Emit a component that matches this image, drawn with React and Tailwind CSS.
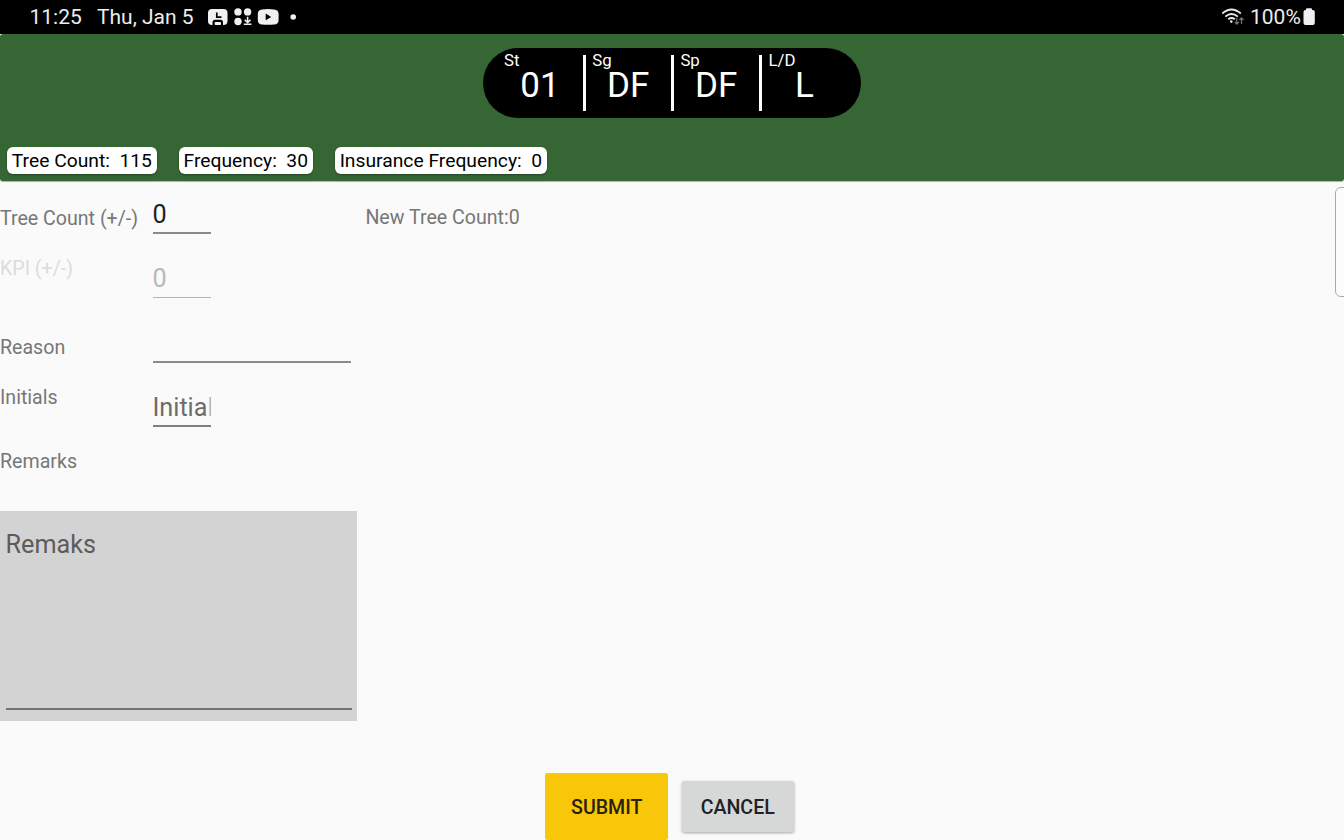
import React from "react";

function StatusBar() {
  return (
    <div className="flex h-[34px] shrink-0 items-center bg-black pl-[29.5px] pr-[28px] text-[21px] leading-[34px] text-[#ececec]">
      <span className="w-[67.5px]">11:25</span>
      <span className="w-[111px]">Thu, Jan 5</span>
      <svg width="90" height="34" viewBox="208 0 90 34" fill="#f0f0f0">
        <rect x="208" y="9" width="19.5" height="16" rx="4" />
        <path d="M216.8 12.5V17.2H221.5" fill="none" stroke="#000" strokeWidth="1.7" />
        <path d="M212.5 25.5V22.5Q212.5 19.8 215.2 19.8H220.5Q223 19.8 223 22.5V25.5Z" fill="#000" />
        <rect x="214.7" y="21.9" width="6.3" height="3.1" rx=".8" />
        <circle cx="238" cy="11.9" r="3.7" />
        <circle cx="247.6" cy="11.9" r="3.7" />
        <circle cx="238" cy="21.5" r="3.7" />
        <path d="M247.6 16.8V22.5M244.7 19.8L247.6 22.5L250.5 19.8M243.8 24.3H251.4" fill="none" stroke="#f0f0f0" strokeWidth="1.6" />
        <path d="M262 9.4Q268 8.8 274 9.4Q278.6 9.7 278.6 14V20Q278.6 24.3 274 24.6Q268 25.1 262 24.6Q257.8 24.3 257.8 20V14Q257.8 9.7 262 9.4Z" />
        <path d="M265.7 13.6L271.2 16.9L265.7 20.2Z" fill="#000" />
        <circle cx="293.2" cy="17" r="2.8" />
      </svg>
      <div className="grow" />
      <svg width="28" height="34" viewBox="1222 0 28 34" fill="none" stroke="#e8e8e8" strokeWidth="1.9">
        <path d="M1222.3 13.5Q1231.5 5.5 1240.8 13.5M1225.3 16.6Q1231.5 11.2 1237.8 16.6M1228.3 19.3Q1231.5 16.8 1234.8 19.3" />
        <circle cx="1231.3" cy="21.6" r="1.3" fill="#e8e8e8" stroke="none" />
        <g stroke="#777" strokeWidth="1.2">
          <path d="M1236.8 18V24M1234.8 22L1236.8 24.2L1238.8 22M1241.5 24V18M1239.5 20L1241.5 17.8L1243.5 20" />
        </g>
      </svg>
      <span className="w-[53px] whitespace-nowrap">100%</span>
      <svg width="13" height="34" viewBox="0 0 13 34" fill="#f0f0f0">
        <rect x="3" y="8.3" width="6" height="4" rx="1" />
        <rect x=".5" y="10" width="11.3" height="15" rx="2" />
      </svg>
    </div>
  );
}

function Segment({ label, value, last }) {
  return (
    <div className="flex">
      <div className="relative w-[79px] text-white">
        <span className="absolute left-[0.5px] top-[2px] text-[16.8px] leading-5">{label}</span>
        <div className="pt-[17px] pr-[6.2px] text-center text-[35px] leading-[41px]">{value}</div>
      </div>
      {!last && <div className="mt-[7px] mr-[6.2px] h-[56px] w-[3px] bg-white" />}
    </div>
  );
}

function Chip({ children }) {
  return (
    <div className="flex h-[27px] items-center whitespace-pre rounded-[6px] bg-white px-[4.8px] pt-[2px] text-[19.27px] text-black shadow-[0_1px_2px_rgba(0,0,0,0.35)]">
      {children}
    </div>
  );
}

function Row({ label, high, disabled, children }) {
  return (
    <div className="flex h-[64.4px]">
      <div className={`w-[152.5px] whitespace-nowrap leading-[23px] ${high ? "pt-[11.7px]" : "pt-[26px]"} ${disabled ? "text-[#dcdcdc]" : "text-[#777777]"}`}>
        {label}
      </div>
      {children}
    </div>
  );
}

function Field({ wide, className = "", children }) {
  return (
    <div className={`h-[53px] overflow-hidden whitespace-nowrap pt-[19px] text-[25.2px] leading-[30px] ${wide ? "w-[198.4px]" : "w-[58.4px]"} ${className}`}>
      {children}
    </div>
  );
}

export default function App() {
  return (
    <div className="relative flex h-[840px] w-[1344px] flex-col overflow-hidden bg-[#fafafa] font-[Roboto,sans-serif] text-[19.6px]">
      <StatusBar />
      <header className="flex h-[147px] shrink-0 flex-col items-center rounded-[3px] bg-[#366634] shadow-[0_1px_1px_rgba(0,0,0,0.3)]">
        <div className="mt-[13.5px] flex h-[70.5px] w-[378px] rounded-full bg-black pl-[20.5px]">
          <Segment label="St" value="01" />
          <Segment label="Sg" value="DF" />
          <Segment label="Sp" value="DF" />
          <Segment label="L/D" value="L" last />
        </div>
        <div className="mt-[29px] flex gap-[22px] self-start pl-[7px]">
          <Chip>Tree Count:  115</Chip>
          <Chip>Frequency:  30</Chip>
          <Chip>Insurance Frequency:  0</Chip>
        </div>
      </header>
      <main className="flex shrink-0 flex-col">
        <Row label="Tree Count (+/-)">
          <Field className="border-b-2 border-[#8a8a8a] text-[#212121]">0</Field>
          <div className="ml-[154.5px] pt-[25px] leading-[23px] text-[#777777]">New Tree Count:0</div>
        </Row>
        <Row label="KPI (+/-)" high disabled>
          <Field className="border-b border-[#b4b4b4] text-[#b8b8b8]">0</Field>
        </Row>
        <Row label="Reason">
          <Field wide className="border-b-2 border-[#8a8a8a]" />
        </Row>
        <Row label="Initials" high>
          <Field className="border-b-2 border-[#808080] text-[#6c6c6c]">
            Initia<span className="text-[#b4b4b4]">ls</span>
          </Field>
        </Row>
        <Row label="Remarks" high />
        <div className="mt-2 flex h-[210px] w-[357px] flex-col bg-[#d3d3d3] px-[5.5px] pb-[11px] pt-[18px]">
          <div className="grow border-b-2 border-[#747474] text-[25.2px] leading-[31px] text-[#5c5c5c]">Remaks</div>
        </div>
      </main>
      <div className="mt-[52px] flex h-[67px] shrink-0 items-center justify-center gap-[14px] pr-[5.5px] text-[19.6px] font-medium">
        <button className="h-[67px] w-[123px] rounded-[2.5px] bg-[#f9c70a] pt-[2px] pl-[1px] text-[#27220a]">SUBMIT</button>
        <button className="mt-[1px] h-[51px] w-[112px] rounded-[2.5px] bg-[#d6d7d7] pt-[2px] text-[#212121] shadow-[0_1px_3px_rgba(0,0,0,0.35)]">CANCEL</button>
      </div>
      <div className="absolute left-[1335px] top-[187px] h-[110px] w-[20px] rounded-[6px] border-[1.5px] border-[#aaaaaa] bg-[#fcfcfc]" />
    </div>
  );
}
